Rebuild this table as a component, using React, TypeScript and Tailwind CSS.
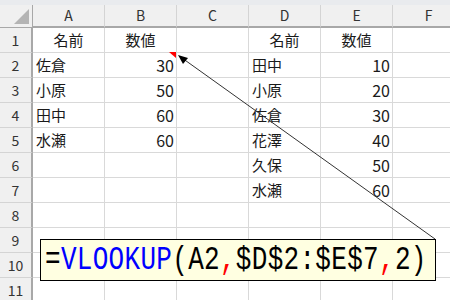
const cols = ["A", "B", "C", "D", "E", "F"];

type Cell = { text: string; align?: "left" | "center" | "right" };

const data: Record<string, Cell> = {
  A1: { text: "名前", align: "center" },
  B1: { text: "数値", align: "center" },
  D1: { text: "名前", align: "center" },
  E1: { text: "数値", align: "center" },
  A2: { text: "佐倉" },
  A3: { text: "小原" },
  A4: { text: "田中" },
  A5: { text: "水瀬" },
  B2: { text: "30", align: "right" },
  B3: { text: "50", align: "right" },
  B4: { text: "60", align: "right" },
  B5: { text: "60", align: "right" },
  D2: { text: "田中" },
  D3: { text: "小原" },
  D4: { text: "佐倉" },
  D5: { text: "花澤" },
  D6: { text: "久保" },
  D7: { text: "水瀬" },
  E2: { text: "10", align: "right" },
  E3: { text: "20", align: "right" },
  E4: { text: "30", align: "right" },
  E5: { text: "40", align: "right" },
  E6: { text: "50", align: "right" },
  E7: { text: "60", align: "right" },
};

const rows = [1, 2, 3, 4, 5, 6, 7, 8, 9, 10, 11];

function DataCell({ id }: { id: string }) {
  const cell = data[id];
  const align =
    cell?.align === "center"
      ? "justify-center"
      : cell?.align === "right"
        ? "justify-end pr-[2px]"
        : "justify-start pl-[3px]";
  const isNum = cell?.align === "right";
  return (
    <div
      className={`relative flex items-center h-[25px] border-r border-b border-[#d9d9d9] text-[#1a1a1a] ${align} ${
        isNum ? "text-[16px]" : "text-[15px]"
      }`}
    >
      {cell?.text}
      {/* comment marker */}
      {id === "B2" && (
        <div className="absolute -top-px right-0 w-0 h-0 border-l-[7px] border-l-transparent border-t-[6px] border-t-[#ff0000]" />
      )}
    </div>
  );
}

export default function App() {
  return (
    <div
      className="relative w-[450px] h-[300px] overflow-hidden bg-white"
      style={{ fontFamily: '"Noto Sans CJK JP", "Noto Sans", sans-serif' }}
    >
      <div className="h-[5px] bg-[#e9ebee]" />
      <div className="grid grid-cols-[33px_repeat(6,72px)]">
        {/* column headers */}
        <div className="relative h-[23px] bg-[#f0f0f0] border-r border-b border-[#a8a8a8]">
          <div className="absolute right-[3px] bottom-[3px] w-0 h-0 border-l-[15px] border-l-transparent border-b-[15px] border-b-[#b4b4b4]" />
        </div>
        {cols.map((c) => (
          <div
            key={c}
            className="flex items-center justify-center h-[23px] bg-[#f0f0f0] border-r border-[#d4d4d4] border-b-2 border-b-[#a8a8a8] text-[14px] text-[#333]"
          >
            {c}
          </div>
        ))}

        {rows.map((r) => (
          <div key={r} className="contents">
            <div className="flex items-center justify-center h-[25px] bg-[#f0f0f0] border-r-2 border-r-[#a8a8a8] border-b border-b-[#d4d4d4] text-[14px] text-[#333]">
              {r}
            </div>
            {cols.map((c) => (
              <DataCell key={c + r} id={c + r} />
            ))}
          </div>
        ))}
      </div>

      {/* arrow from callout to B2 */}
      <svg className="absolute inset-0 pointer-events-none" width="450" height="300">
        <line x1="435" y1="239" x2="182" y2="58" stroke="#333" strokeWidth="1" />
        <polygon points="178,55 188,58 183,64" fill="#000" />
      </svg>

      {/* formula callout */}
      <div className="absolute left-[40px] top-[239px] w-[396px] h-[42px] flex items-center pl-[4px] bg-[#ffffe1] border border-black">
        <span
          className="text-[26px] leading-none scale-y-[1.3] tracking-[0.3px]"
          style={{ fontFamily: '"Liberation Mono", "DejaVu Sans Mono", monospace' }}
        >
          <span className="text-black">=</span>
          <span className="text-[#0000ff]">VLOOKUP</span>
          <span className="text-black">(A2</span>
          <span className="text-[#ff0000]">,</span>
          <span className="text-black">$D$2:$E$7</span>
          <span className="text-[#ff0000]">,</span>
          <span className="text-black">2)</span>
        </span>
      </div>
    </div>
  );
}
